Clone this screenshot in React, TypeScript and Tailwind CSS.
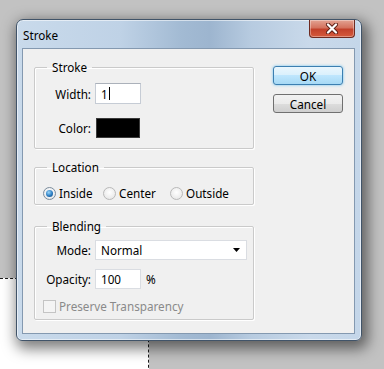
import React from "react";

const font = { fontFamily: '"Noto Sans", "Open Sans", sans-serif' };

const Radio = ({ checked, label, className }: { checked?: boolean; label: string; className?: string }) => (
  <div className={"flex items-center gap-[3px] " + (className ?? "")}>
    <span
      className={
        "flex h-[13px] w-[13px] items-center justify-center rounded-full border " +
        (checked
          ? "border-[#7b8c9c] bg-[radial-gradient(circle_at_50%_40%,#ffffff,#dfe3e7)]"
          : "border-[#b9b9b9] bg-[radial-gradient(circle_at_50%_40%,#ffffff,#e2e2e2)]")
      }
    >
      {checked && (
        <span className="h-[7px] w-[7px] rounded-full bg-[radial-gradient(circle_at_40%_35%,#9cd8fb,#2a7cc2_55%,#0f416f)]" />
      )}
    </span>
    <span>{label}</span>
  </div>
);

const App = () => {
  return (
    <div
      className="relative h-[369px] w-[384px] overflow-hidden bg-[#c2c2c2] pl-[16px] pt-[19px] text-[11.7px] leading-[16px] text-black"
      style={font}
    >
      {/* canvas with selection edge behind the dialog */}
      <div className="absolute left-0 top-[278px] h-[100px] w-[149px] border-r border-t border-dashed border-[#1a1a1a] bg-white" />

      {/* window */}
      <div className="relative flex h-[322px] w-[346px] flex-col rounded-b-[6px] rounded-t-[7px] border border-[#415469] bg-[linear-gradient(90deg,#c9daeb_0%,#bfd2e6_30%,#a2bad3_48%,#9db5cf_56%,#b7cbe0_68%,#c9d9ea_85%,#c4d6e9_100%)] pl-[5px] pr-[6px] shadow-[3px_5px_14px_3px_rgba(0,0,0,0.5),inset_0_0_0_1px_rgba(255,255,255,0.55)]">
        {/* title bar */}
        <div className="flex h-[28px] items-start">
          <span className="ml-[1px] mt-[7px]">Stroke</span>
          <div className="ml-auto flex h-[18px] w-[46px] items-center justify-center rounded-b-[4px] border border-t-0 border-[#6e2a20] bg-[linear-gradient(#e3a393_0%,#d4735f_45%,#c2412b_55%,#d45a3c_100%)] shadow-[inset_0_0_0_1px_rgba(255,255,255,0.35)]">
            <svg width="14" height="11" viewBox="0 0 14 11">
              <path d="M3 1.5 L11 9.5 M11 1.5 L3 9.5" stroke="#5a1d14" strokeWidth="4" strokeLinecap="round" />
              <path d="M3 1.5 L11 9.5 M11 1.5 L3 9.5" stroke="#ffffff" strokeWidth="2.3" strokeLinecap="round" />
            </svg>
          </div>
        </div>

        {/* client area */}
        <div className="flex h-[286px] border border-[#8499b0] bg-[#f0f0f0] pl-[11px] pt-[10px]">
          <div className="flex w-[220px] flex-col">
            {/* Stroke */}
            <fieldset className="rounded-[2px] border border-[#cacaca] pb-[10px] pt-[8px] shadow-[inset_1px_1px_0_#ffffff,1px_1px_0_#ffffff]">
              <legend className="ml-[12px] px-[5px]">Stroke</legend>
              <div className="grid grid-cols-[56px_auto] items-center gap-x-[4px] gap-y-[14px]">
                <span className="text-right">Width:</span>
                <div className="flex h-[21px] w-[46px] items-center border border-[#c6ccd5] border-t-[#abb1ba] bg-white pl-[5px]">
                  <span>1</span>
                  <span className="ml-[1px] h-[13px] w-px bg-black" />
                </div>
                <span className="text-right">Color:</span>
                <div className="ml-[1px] h-[20px] w-[44px] border border-[#3a3a3a] bg-black" />
              </div>
            </fieldset>

            {/* Location */}
            <fieldset className="mt-[10px] rounded-[2px] border border-[#cacaca] pb-[3px] pl-[8px] pt-[10px] shadow-[inset_1px_1px_0_#ffffff,1px_1px_0_#ffffff]">
              <legend className="ml-[4px] px-[5px]">Location</legend>
              <div className="flex h-[16px] items-center">
                <Radio checked label="Inside" className="w-[60px]" />
                <Radio label="Center" className="w-[67px]" />
                <Radio label="Outside" />
              </div>
            </fieldset>

            {/* Blending */}
            <fieldset className="mt-[13px] rounded-[2px] border border-[#cacaca] pb-[5px] pt-[6px] shadow-[inset_1px_1px_0_#ffffff,1px_1px_0_#ffffff]">
              <legend className="ml-[12px] px-[5px]">Blending</legend>
              <div className="grid grid-cols-[56px_auto] items-center gap-x-[4px] gap-y-[9px]">
                <span className="text-right">Mode:</span>
                <div className="flex h-[20px] w-[152px] items-center justify-between border border-[#dadde2] bg-white pl-[5px] pr-[6px]">
                  <span>Normal</span>
                  <svg width="7" height="4" viewBox="0 0 7 4">
                    <path d="M0 0 H7 L3.5 4 Z" fill="#000" />
                  </svg>
                </div>
                <span className="text-right">Opacity:</span>
                <div className="flex items-center">
                  <div className="flex h-[20px] w-[46px] items-center border border-[#dadde2] bg-white pl-[5px]">100</div>
                  <span className="ml-[5px]">%</span>
                </div>
              </div>
              <div className="mt-[9px] flex h-[16px] items-center gap-[3px] pl-[8px] text-[#8a8a8a]">
                <span className="h-[13px] w-[13px] border border-[#c4c4c4] bg-[#f4f4f4]" />
                <span>Preserve Transparency</span>
              </div>
            </fieldset>
          </div>

          {/* buttons */}
          <div className="ml-[19px] mt-[7px] flex flex-col gap-[9px]">
            <button className="h-[19px] w-[70px] rounded-[3px] border border-[#3c7fb1] bg-[linear-gradient(#eaf6fd,#d9f0fc_50%,#bee6fd_50%,#a7d9f5)] leading-[16px] shadow-[0_0_3px_#6cc0f0]">
              OK
            </button>
            <button className="h-[19px] w-[70px] rounded-[3px] border border-[#707070] bg-[linear-gradient(#f2f2f2,#ebebeb_50%,#dddddd_50%,#cfcfcf)] leading-[16px]">
              Cancel
            </button>
          </div>
        </div>
      </div>
    </div>
  );
};

export default App;
